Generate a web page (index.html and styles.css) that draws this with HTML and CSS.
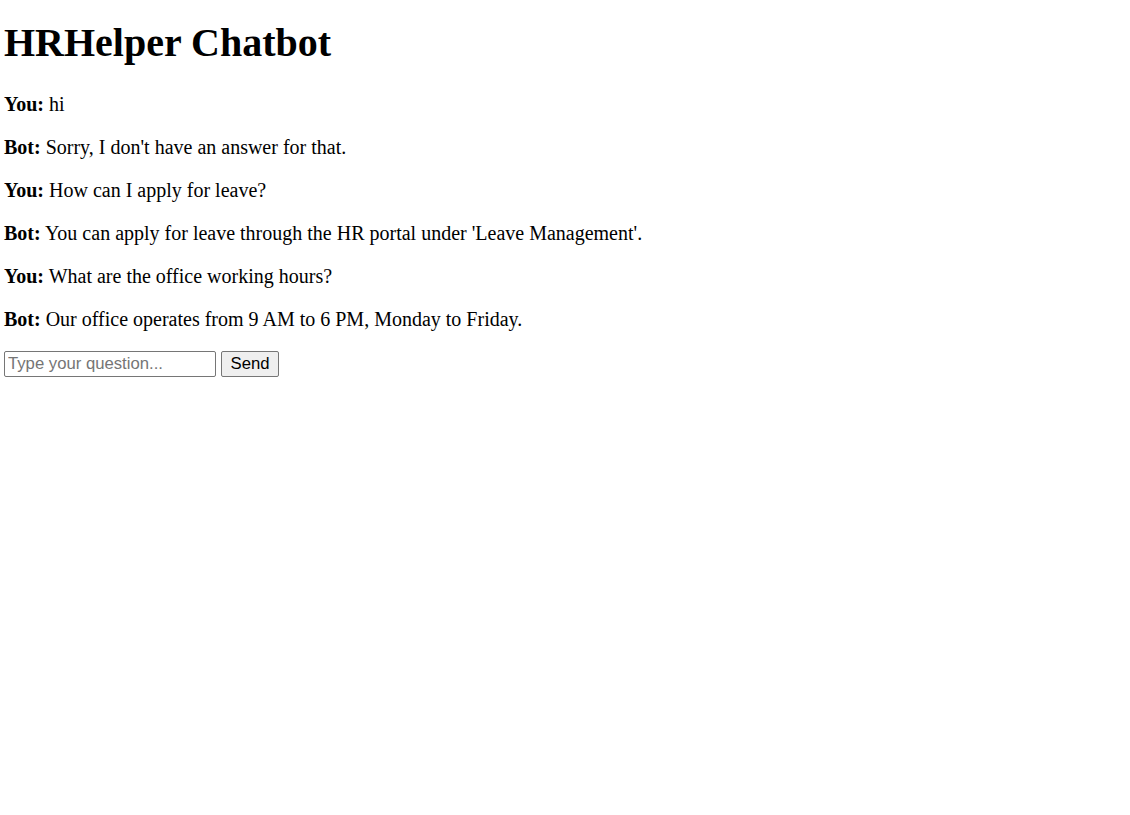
FILE: index.html
```html
<!DOCTYPE html>
<html>
<head>
<meta charset="utf-8">
<title>HRHelper Chatbot</title>
<link rel="stylesheet" href="styles.css">
</head>
<body>
<h1 class="title">HRHelper Chatbot</h1>
<div class="chat">
  <p class="msg"><b>You:</b> hi</p>
  <p class="msg"><b>Bot:</b> Sorry, I don't have an answer for that.</p>
  <p class="msg"><b>You:</b> How can I apply for leave?</p>
  <p class="msg"><b>Bot:</b> You can apply for leave through the HR portal under 'Leave Management'.</p>
  <p class="msg"><b>You:</b> What are the office working hours?</p>
  <p class="msg"><b>Bot:</b> Our office operates from 9 AM to 6 PM, Monday to Friday.</p>
</div>
<form class="composer">
  <input class="field" type="text" placeholder="Type your question...">
  <button class="send" type="button">Send</button>
</form>
</body>
</html>
```

FILE: styles.css
```css
body {
  margin: 0;
  padding: 0 4px;
  font-family: "Liberation Serif", "Times New Roman", serif;
  font-size: 20px;
  color: #000;
  background: #fff;
}
.title {
  font-size: 40px;
  font-weight: bold;
  line-height: 46px;
  margin: 20px 0 27px;
}
.msg {
  margin: 20px 0;
  line-height: 23px;
}
.chat .msg:first-child { margin-top: 0; }
.composer {
  display: flex;
  gap: 5px;
  margin: 0;
}
.field {
  box-sizing: border-box;
  width: 212px;
  height: 26px;
  border: 1px solid #767676;
  border-radius: 2px;
  padding: 1px 3px;
  font-family: "Liberation Sans", Arial, sans-serif;
  font-size: 16.7px;
  margin: 0;
}
.field::placeholder { color: #757575; }
.send {
  box-sizing: border-box;
  width: 58px;
  height: 26px;
  border: 1px solid #767676;
  border-radius: 2px;
  background: #efefef;
  font-family: "Liberation Sans", Arial, sans-serif;
  font-size: 16.7px;
  padding: 0 8px;
  margin: 0;
  color: #000;
}
```
